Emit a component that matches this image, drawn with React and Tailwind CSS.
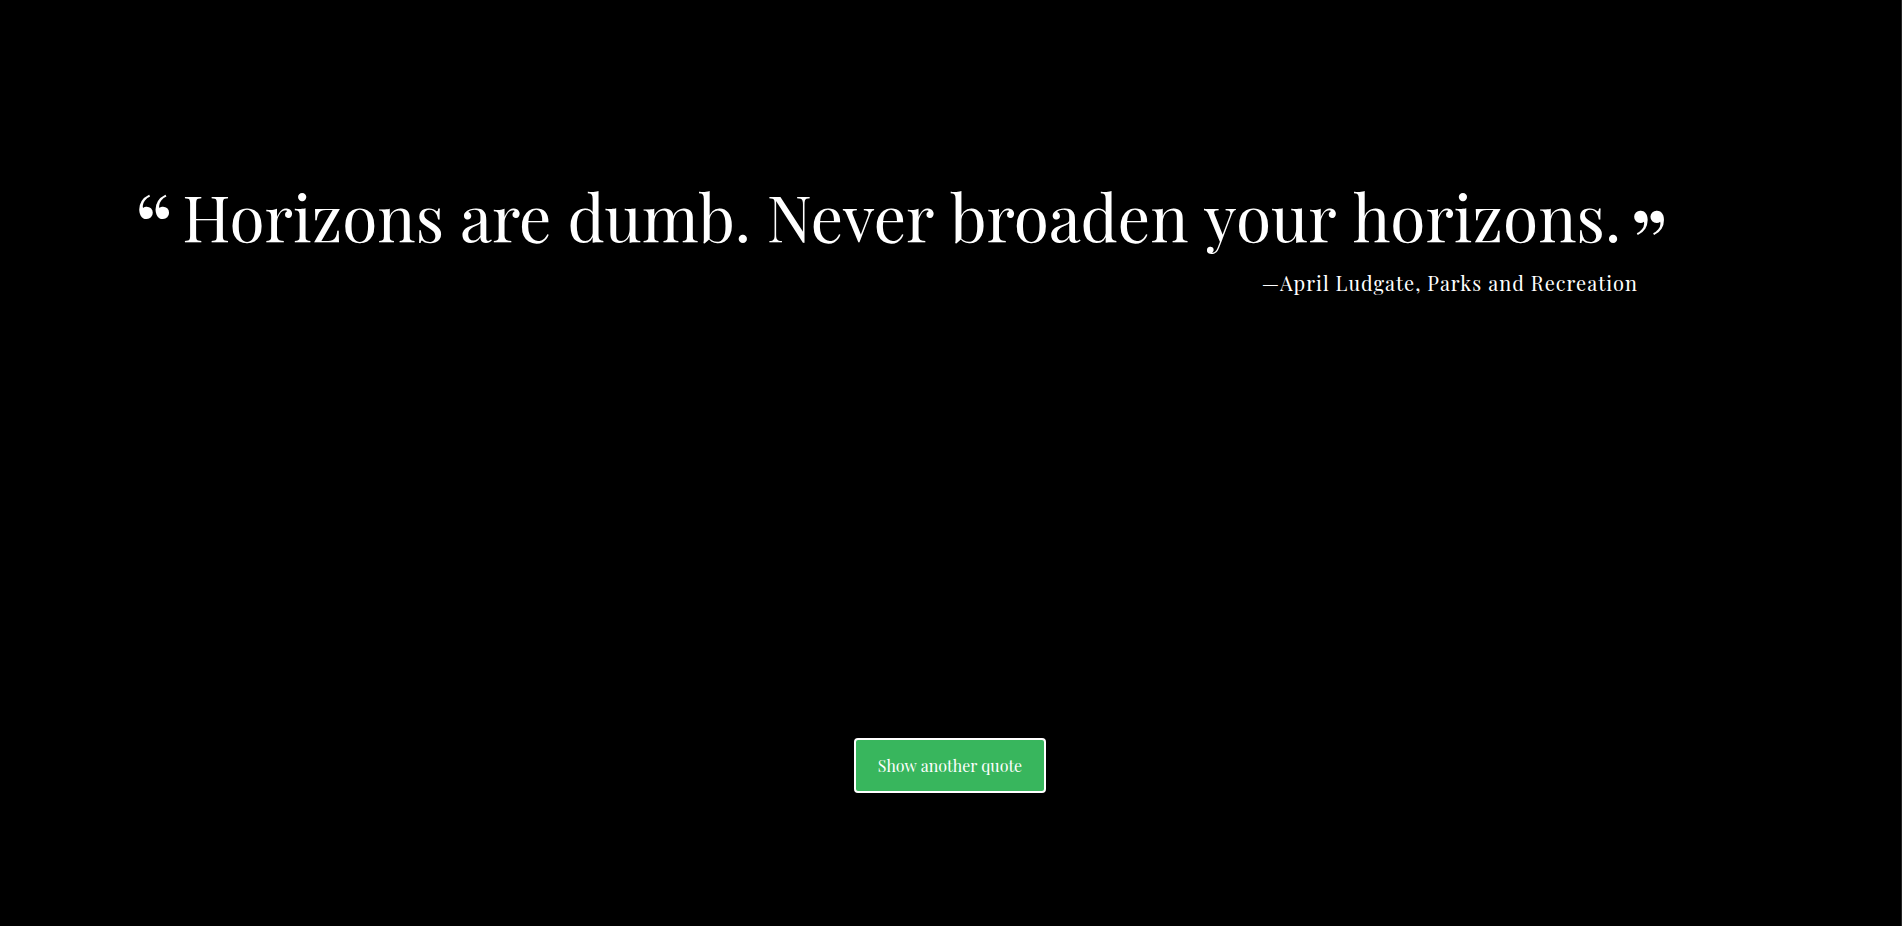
import { Fragment } from "react";

const quote = {
  text: "Horizons are dumb. Never broaden your horizons.",
  source: "April Ludgate, Parks and Recreation",
};

// Each word is its own inline block, so the font does not kern across spaces.
function Words({ text }) {
  return text.split(" ").map((word, i) => (
    <Fragment key={i}>
      {i > 0 && " "}
      <span className="inline-block">{word}</span>
    </Fragment>
  ));
}

export default function App() {
  return (
    <main className="flex min-h-screen flex-col items-center justify-between border-r border-[#262626] bg-black pr-[135px] pl-[134px] pt-44 pb-[133px] font-['Playfair_Display','Liberation_Serif',serif] text-white">
      <figure className="flex w-full flex-col">
        <blockquote className="flex items-start gap-2 text-[64px] leading-[80px]">
          <span aria-hidden="true" className="pt-2 text-[96px]">“</span>
          <p>
            <Words text={quote.text} />
          </p>
          <span aria-hidden="true" className="pt-6 text-[96px]">”</span>
        </blockquote>
        <figcaption className="-mt-3 pr-32 text-right text-[20px] leading-[30px] tracking-[1px]">
          —{quote.source}
        </figcaption>
      </figure>
      <button
        type="button"
        className="h-[55px] rounded border-2 border-white bg-[#38b65d] px-[22px] text-[16px]"
      >
        <Words text="Show another quote" />
      </button>
    </main>
  );
}
